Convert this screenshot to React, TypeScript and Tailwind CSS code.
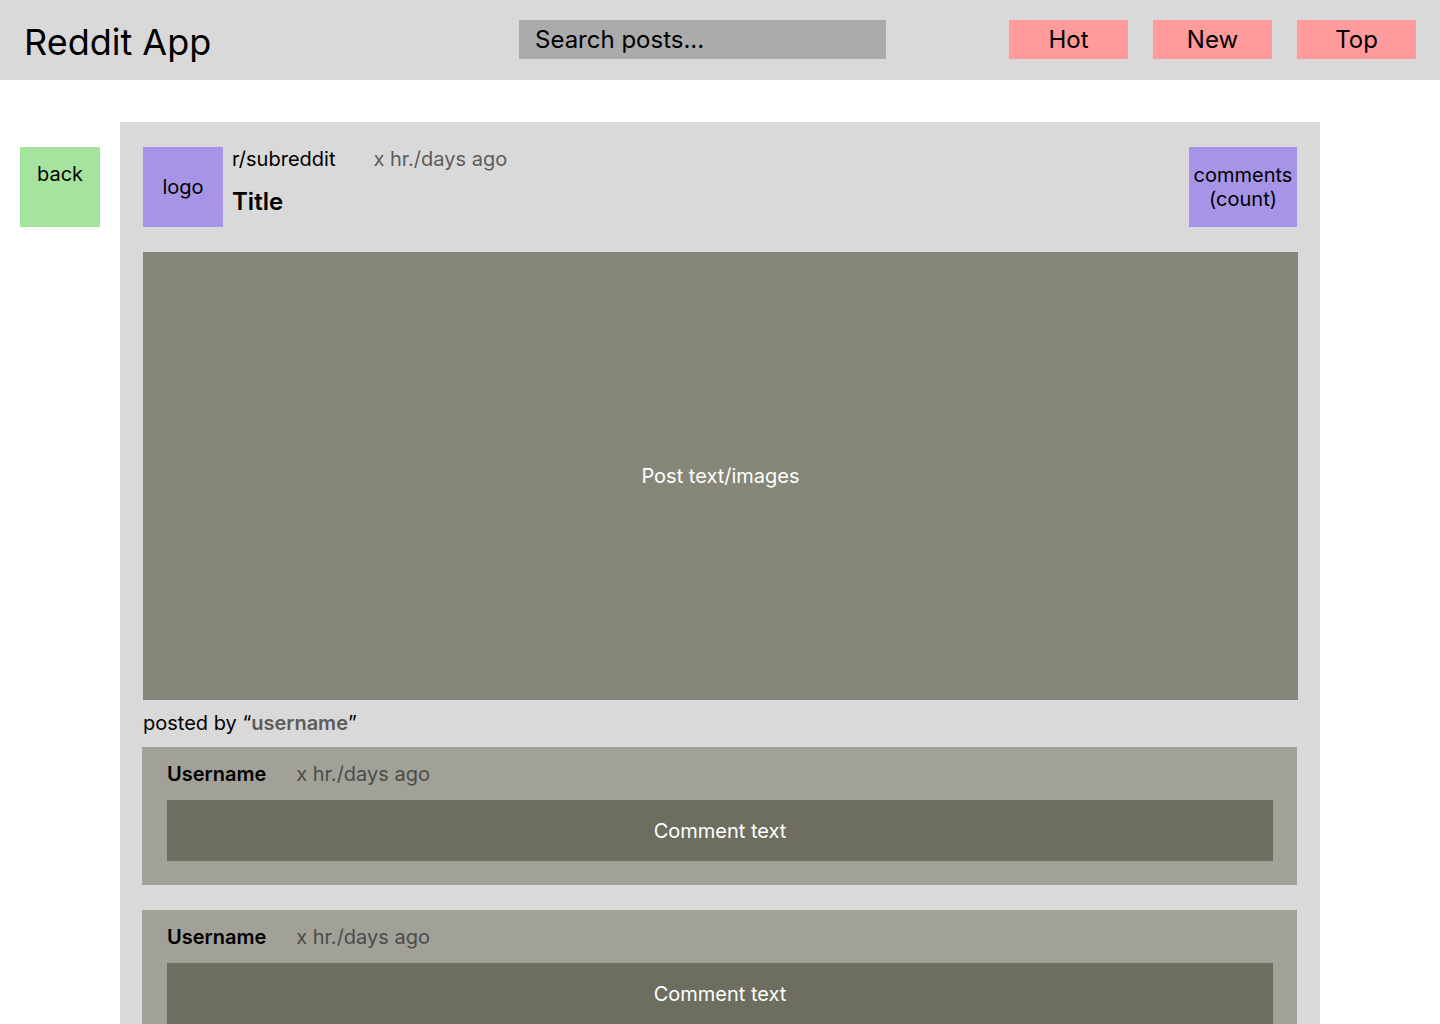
const sorts = ["Hot", "New", "Top"];
const comments = [
  { id: 1, user: "Username", age: "x hr./days ago", text: "Comment text" },
  { id: 2, user: "Username", age: "x hr./days ago", text: "Comment text" },
];

function Header() {
  return (
    <header className="grid h-20 grid-cols-[1fr_367px_auto] items-start gap-x-[123px] bg-[#d9d9d9] px-6 pt-5">
      <h1 className="text-4xl leading-[44px]">Reddit App</h1>
      <input
        type="search"
        aria-label="Search posts"
        placeholder="Search posts..."
        className="h-[39px] w-full bg-[#ababab] px-4 text-2xl text-black outline-none placeholder:text-black"
      />
      <nav className="flex justify-end gap-[25px]">
        {sorts.map((sort) => (
          <button key={sort} type="button" className="h-[39px] w-[119px] bg-[#ff9b9b] text-2xl">
            {sort}
          </button>
        ))}
      </nav>
    </header>
  );
}

function Comment({ user, age, text }: { user: string; age: string; text: string }) {
  return (
    <li className="bg-[#a1a198] pt-[15px] pr-6 pb-6 pl-[25px]">
      <div className="flex gap-[30px]">
        <span className="font-semibold">{user}</span>
        <span className="text-[#4b4b4b]">{age}</span>
      </div>
      <p className="mt-[14px] bg-[#6d6e60] pt-[19px] pb-[18px] text-center text-white">{text}</p>
    </li>
  );
}

export default function App() {
  return (
    <div className="h-screen overflow-hidden bg-white font-['Inter',sans-serif] text-xl leading-6 text-black">
      <Header />
      <main className="grid grid-cols-[80px_1fr] gap-5 pt-[42px] pr-[120px] pl-5">
        <button type="button" className="mt-[25px] flex h-20 justify-center bg-[#a6e39e] pt-[15px]">
          back
        </button>
        <article className="bg-[#d9d9d9] px-[22px] pt-[25px] pb-6">
          <div className="mx-px flex h-20">
            <div className="flex w-20 items-center justify-center bg-[#a694e6]">logo</div>
            <div className="ml-[9px] flex-1">
              <div className="flex gap-[38px]">
                <span>r/subreddit</span>
                <span className="text-[#5c5c5c]">x hr./days ago</span>
              </div>
              <h2 className="mt-4 text-2xl leading-[29px] font-semibold">Title</h2>
            </div>
            <button type="button" className="w-[108px] bg-[#a694e6] text-center">
              comments (count)
            </button>
          </div>
          <div className="mt-[25px] ml-px flex h-[448px] items-center justify-center bg-[#868679] text-white">
            Post text/images
          </div>
          <p className="mt-[11px] ml-px">
            posted by “<span className="font-semibold text-[#5c5c5c]">username</span>”
          </p>
          <ul className="mt-3 mr-px flex flex-col gap-[25px]">
            {comments.map((c) => (
              <Comment key={c.id} user={c.user} age={c.age} text={c.text} />
            ))}
          </ul>
        </article>
      </main>
    </div>
  );
}
